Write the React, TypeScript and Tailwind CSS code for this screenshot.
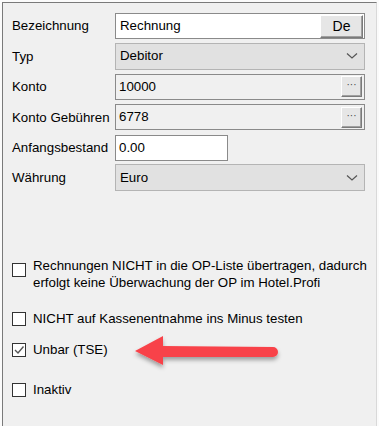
import React from "react";

const font = { fontFamily: '"Liberation Sans", Arial, sans-serif' };

function Chevron() {
  return (
    <svg width="12" height="8" viewBox="0 0 12 8" className="block">
      <path d="M1 1.5 L6 6 L11 1.5" fill="none" stroke="#555" strokeWidth="1.2" />
    </svg>
  );
}

function Row({ label, children }: { label: string; children: React.ReactNode }) {
  return (
    <div className="flex items-center h-[26px]">
      <div className="w-[103px] shrink-0 text-[13.3px] text-black leading-none">{label}</div>
      {children}
    </div>
  );
}

function Box({ checked }: { checked?: boolean }) {
  return (
    <div className="w-[14px] h-[14px] shrink-0 border border-[#333] bg-white flex items-center justify-center">
      {checked && (
        <svg width="12" height="12" viewBox="0 0 12 12">
          <path d="M2 6 L5 9 L10.5 2.5" fill="none" stroke="#555" strokeWidth="1.4" />
        </svg>
      )}
    </div>
  );
}

export default function App() {
  return (
    <div className="w-[379px] h-[426px] bg-[#fbfbfb] relative overflow-hidden" style={font}>
      <div className="absolute left-[2px] top-[2px] w-[375px] h-[424px] bg-[#f0f0f0] border-l border-t border-[#7a7a7a] border-r border-r-[#d9d9d9]">
        <div className="pl-[9px] pt-[10px] flex flex-col gap-[4.4px] w-[362px]">
          <Row label="Bezeichnung">
            <div className="flex-1 h-[26px] bg-white border border-[#8a8a8a] flex items-center pl-[4px] pr-[1px]">
              <span className="flex-1 text-[13.3px]">Rechnung</span>
              <div className="w-[43px] h-[23px] bg-[#e6e6e6] border border-[#7a7a7a] border-t-white border-l-white shadow-[inset_-1px_-1px_0_#a0a0a0] flex items-center justify-center text-[14px]">
                De
              </div>
            </div>
          </Row>
          <Row label="Typ">
            <div className="flex-1 h-[27px] bg-[#e1e1e1] border border-[#b4b4b4] flex items-center pl-[4px] pr-[6px]">
              <span className="flex-1 text-[13.3px]">Debitor</span>
              <Chevron />
            </div>
          </Row>
          <Row label="Konto">
            <div className="flex-1 h-[26px] bg-[#f0f0f0] border border-[#8a8a8a] flex items-center pl-[3px] pr-[2px]">
              <span className="flex-1 text-[13.3px]">10000</span>
              <div className="w-[21px] h-[21px] bg-[#e6e6e6] border border-[#7a7a7a] border-t-white border-l-white shadow-[inset_-1px_-1px_0_#a0a0a0] flex items-center justify-center text-[10px] text-[#444] leading-none pb-[3px]">
                ···
              </div>
            </div>
          </Row>
          <Row label="Konto Gebühren">
            <div className="flex-1 h-[26px] bg-[#f0f0f0] border border-[#8a8a8a] flex items-center pl-[3px] pr-[2px]">
              <span className="flex-1 text-[13.3px]">6778</span>
              <div className="w-[21px] h-[21px] bg-[#e6e6e6] border border-[#7a7a7a] border-t-white border-l-white shadow-[inset_-1px_-1px_0_#a0a0a0] flex items-center justify-center text-[10px] text-[#444] leading-none pb-[3px]">
                ···
              </div>
            </div>
          </Row>
          <Row label="Anfangsbestand">
            <div className="w-[113px] h-[26px] bg-white border border-[#8a8a8a] flex items-center pl-[3px]">
              <span className="text-[13.3px]">0.00</span>
            </div>
          </Row>
          <Row label="Währung">
            <div className="flex-1 h-[27px] bg-[#e1e1e1] border border-[#b4b4b4] flex items-center pl-[4px] pr-[6px]">
              <span className="flex-1 text-[13.3px]">Euro</span>
              <Chevron />
            </div>
          </Row>
        </div>

        <div className="pl-[9px] mt-[66px] flex flex-col text-[13.3px] text-black">
          <div className="flex items-start gap-[7px]">
            <div className="mt-[6px]"><Box /></div>
            <div className="leading-[17px]">
              Rechnungen NICHT in die OP-Liste übertragen, dadurch
              <br />
              erfolgt keine Überwachung der OP im Hotel.Profi
            </div>
          </div>
          <div className="flex items-center gap-[7px] mt-[18px]">
            <Box />
            <span>NICHT auf Kassenentnahme ins Minus testen</span>
          </div>
          <div className="flex items-center gap-[7px] mt-[11px]">
            <Box checked />
            <span>Unbar (TSE)</span>
          </div>
          <div className="flex items-center gap-[7px] mt-[20px]">
            <Box />
            <span>Inaktiv</span>
          </div>
        </div>
      </div>

      <svg className="absolute left-[128px] top-[330px]" width="160" height="44" viewBox="0 0 160 44">
        <defs>
          <filter id="sh" x="-10%" y="-30%" width="130%" height="180%">
            <feDropShadow dx="0" dy="3" stdDeviation="2" floodColor="#000" floodOpacity="0.35" />
          </filter>
        </defs>
        <g filter="url(#sh)">
          <path d="M7 21 L35 6 L35 16 L145 17 A5 5 0 0 1 145 27 L35 27 L35 35 Z" fill="#f8434a" />
        </g>
      </svg>
    </div>
  );
}
